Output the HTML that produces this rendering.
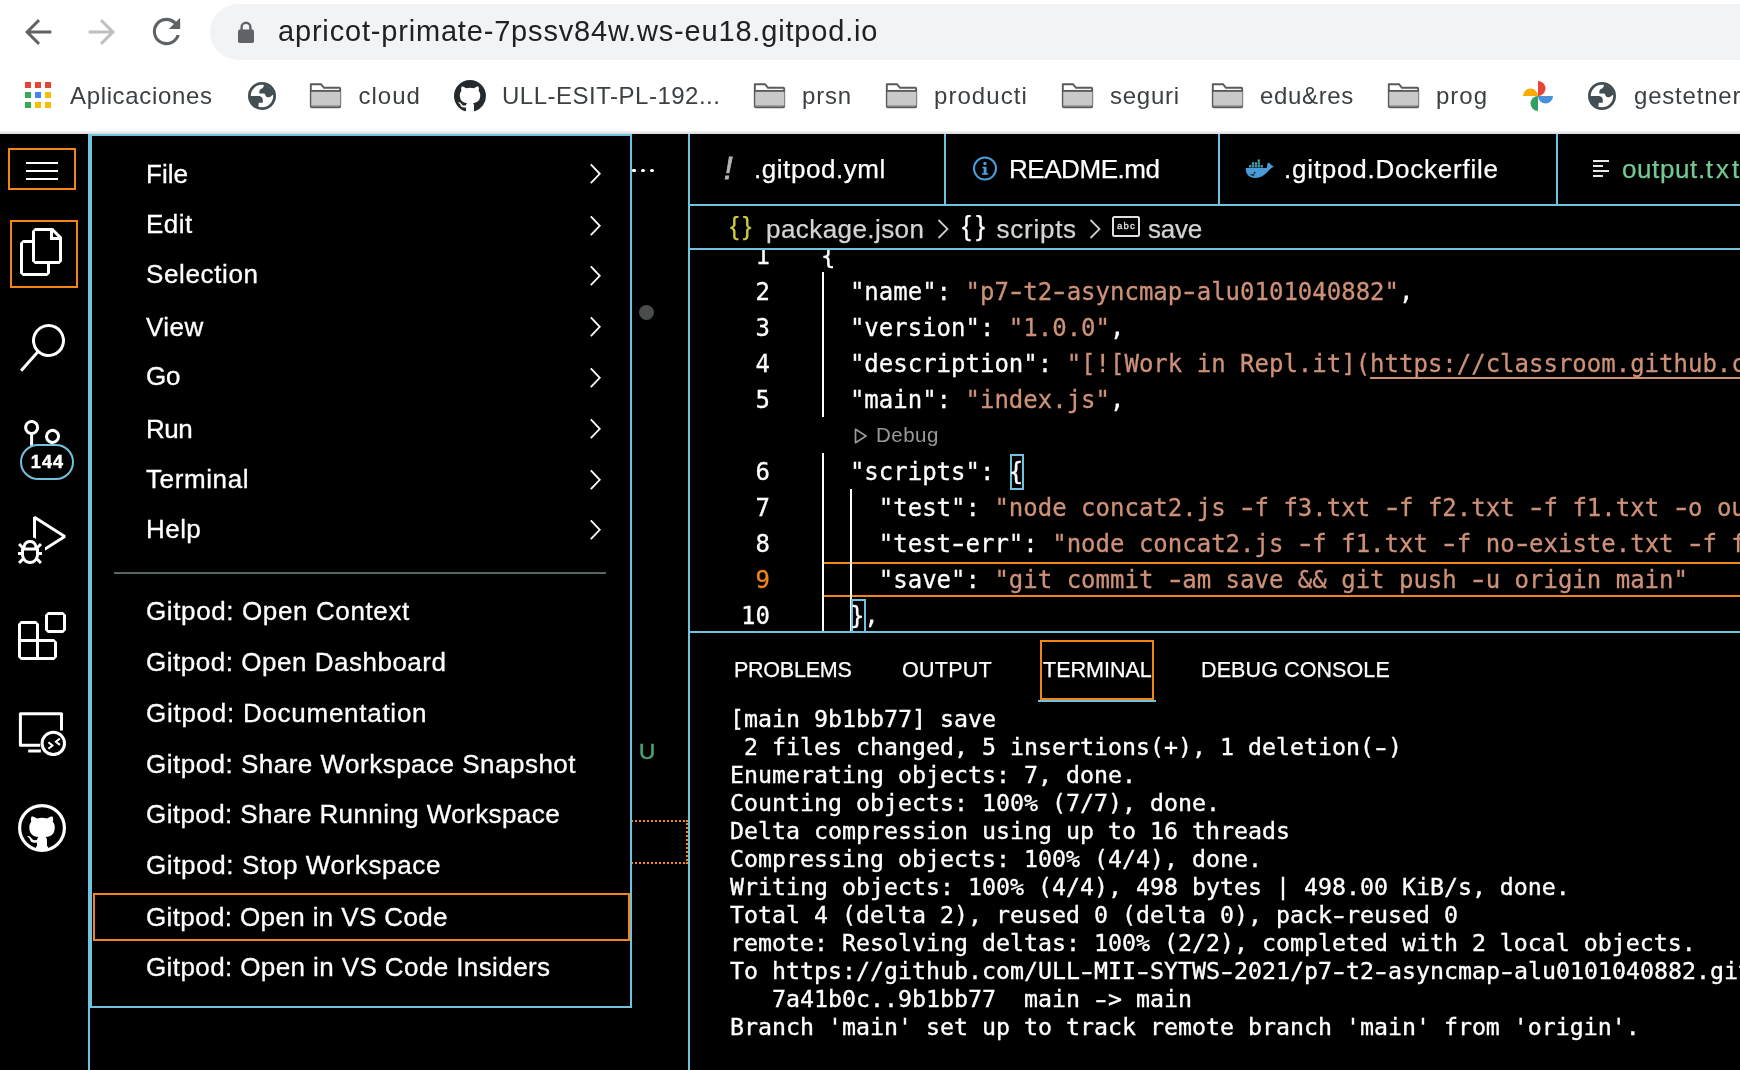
<!DOCTYPE html>
<html>
<head>
<meta charset="utf-8">
<title>Gitpod workspace</title>
<style>
*{box-sizing:border-box;margin:0;padding:0}
html,body{width:1740px;height:1070px;overflow:hidden;background:#000}
body{position:relative;font-family:"Liberation Sans",sans-serif;color:#fff}
.abs{position:absolute}
/* ---------- browser chrome ---------- */
#chrome{position:absolute;left:0;top:0;width:1740px;height:134px;background:#fff}
#chrome .shade{position:absolute;left:0;top:131px;width:1740px;height:3px;background:linear-gradient(#f4f4f4,#d9d9d9)}
#omni{position:absolute;left:210px;top:4px;width:1600px;height:56px;border-radius:28px;background:#f1f3f4}
#url{position:absolute;left:278px;top:13px;font-size:29px;line-height:36px;color:#202124;white-space:nowrap;letter-spacing:0.82px}
#apps i{position:absolute;width:6px;height:6px;display:block}
.bm{position:absolute;top:81px;font-size:24px;line-height:30px;color:#3c4043;white-space:nowrap;letter-spacing:0.5px}
/* ---------- workbench ---------- */
#wb{position:absolute;left:0;top:134px;width:1740px;height:936px;background:#000}
.vline{position:absolute;background:#6fc3df;width:2px}
.hline{position:absolute;background:#6fc3df;height:2px}
/* menu */
#menu{position:absolute;left:89.8px;top:133.8px;width:542.5px;height:874px;border:2px solid #6fc3df;background:#000}
.mi{-webkit-text-stroke:.3px;position:absolute;left:146px;font-size:26px;line-height:32px;color:#fff;white-space:nowrap;letter-spacing:0.45px}
.chev{position:absolute;left:588.5px;width:12.6px;height:21.6px}
#sel{position:absolute;left:92.7px;top:892.6px;width:537px;height:48.8px;border:2px solid #f38518}
/* editor */
.tab{-webkit-text-stroke:.25px;position:absolute;top:150px;font-size:26px;line-height:36px;color:#fff;white-space:nowrap;letter-spacing:0.3px}
.bc{color:#d4d4d4}
.code{-webkit-text-stroke:.3px;position:absolute;font-family:"DejaVu Sans Mono","Liberation Mono",monospace;font-size:24px;line-height:36px;white-space:pre;color:#fff;letter-spacing:0}
.ln{-webkit-text-stroke:.3px;position:absolute;width:70px;text-align:right;font-family:"DejaVu Sans Mono","Liberation Mono",monospace;font-size:24px;line-height:36px;color:#fff}
.h{display:inline-block;font-weight:normal;transform:scaleX(1.45)}
.s{color:#ce9178}
.s u{text-decoration:underline;text-decoration-thickness:1.6px;text-underline-offset:5px}
.term{-webkit-text-stroke:.35px #fff;position:absolute;left:730px;font-family:"DejaVu Sans Mono","Liberation Mono",monospace;font-size:23.25px;line-height:28px;white-space:pre;color:#fff}
.pt{-webkit-text-stroke:.25px;position:absolute;font-size:21.5px;line-height:30px;color:#fff;white-space:nowrap;letter-spacing:0}
</style>
</head>
<body><div id="root" style="position:absolute;left:0;top:0;width:1740px;height:1070px;will-change:transform">
<div id="chrome">
  <div id="omni"></div>
  <div id="url">apricot-primate-7pssv84w.ws-eu18.gitpod.io</div>
  
  <svg class="abs" style="left:18px;top:12px" width="40" height="40" viewBox="0 0 24 24"><path fill="#5f6368" d="M20 11.1H7.6l5.6-5.6L12 4.2l-7.8 7.8 7.8 7.8 1.2-1.3-5.6-5.6H20z"/></svg>
  <svg class="abs" style="left:82px;top:12px" width="40" height="40" viewBox="0 0 24 24"><path fill="#bdbfc1" d="M4 11.1h12.4l-5.6-5.6L12 4.2l7.8 7.8-7.8 7.8-1.2-1.3 5.6-5.6H4z"/></svg>
  <svg class="abs" style="left:146px;top:11px" width="41" height="41" viewBox="0 0 24 24"><path fill="#5f6368" d="M17.65 6.35C16.2 4.9 14.21 4 12 4c-4.42 0-7.99 3.58-7.99 8s3.57 8 7.99 8c3.73 0 6.84-2.55 7.73-6h-1.88c-.82 2.33-3.04 4.2-5.85 4.2-3.41 0-6.2-2.79-6.2-6.2s2.79-6.2 6.2-6.2c1.76 0 3.24.79 4.32 1.88L13.4 10.6H20V4l-2.35 2.35z"/></svg>
  <svg class="abs" style="left:236px;top:20px" width="20" height="24" viewBox="0 0 20 24"><path fill="none" stroke="#5f6368" stroke-width="2.4" d="M5.6 11V7.2a4.4 4.4 0 0 1 8.8 0V11"/><rect x="2" y="9.6" width="16" height="13.4" rx="1.8" fill="#5f6368"/></svg>
  <div id="apps" class="abs" style="left:25px;top:82px;width:26px;height:26px">
    <i style="left:0;top:0;background:#ea4335"></i><i style="left:10px;top:0;background:#ea4335"></i><i style="left:20px;top:0;background:#ea4335"></i>
    <i style="left:0;top:10px;background:#34a853"></i><i style="left:10px;top:10px;background:#4285f4"></i><i style="left:20px;top:10px;background:#fbbc04"></i>
    <i style="left:0;top:20px;background:#34a853"></i><i style="left:10px;top:20px;background:#fbbc04"></i><i style="left:20px;top:20px;background:#fbbc04"></i>
  </div>
  <div class="bm" style="left:70px;letter-spacing:.65px">Aplicaciones</div>
  <svg class="abs" style="left:248px;top:82px" width="28" height="28" viewBox="0 0 28 28"><defs><clipPath id="g245"><circle cx="14" cy="14" r="11.6"/></clipPath></defs><circle cx="14" cy="14" r="12.6" fill="#fff" stroke="#434d54" stroke-width="2.800"/><g clip-path="url(#g245)" fill="#434d54"><path d="M16 0L16 2C15.800 5 15 6.300 13.500 6.800C11.800 7.400 11.300 8.500 11.300 11.400L16 11.400C17 11.400 17.200 12.500 17.900 14.300C18.600 15.200 19.600 15.400 20.700 15.200C22.500 15 23.900 13.300 25.300 12.400L28 12L28 0Z"/><path d="M0 13.900L11.300 14.100C13.500 14.400 14.800 16 14.800 18L14.800 20.800L10.800 20.800L10.400 24.100L10 28L0 28Z"/></g></svg>
  <svg class="abs" style="left:309px;top:82px" width="34" height="28" viewBox="0 0 34 28"><path d="M1.8 2.2h10.2l3 3.6h15.2q1 0 1 1v17.4q0 1-1 1H2.8q-1 0-1-1z" fill="#fff" stroke="#5a5a5a" stroke-width="1.9" stroke-linejoin="round"/><path d="M2.4 9.3h29v14.4h-29z" fill="#c9c9c9"/><path d="M1.8 8.9h29.4" stroke="#5a5a5a" stroke-width="1.9"/><path d="M2.6 23.6h28.8" stroke="#9a9a9a" stroke-width="1"/></svg>
  <div class="bm" style="left:358.5px;letter-spacing:1px">cloud</div>
  <svg class="abs" style="left:454px;top:80px" width="32" height="32" viewBox="0 0 16 16"><path fill="#24292e" d="M8 0C3.58 0 0 3.58 0 8c0 3.54 2.29 6.53 5.47 7.59.4.07.55-.17.55-.38 0-.19-.01-.82-.01-1.49-2.01.37-2.53-.49-2.69-.94-.09-.23-.48-.94-.82-1.13-.28-.15-.68-.52-.01-.53.63-.01 1.08.58 1.23.82.72 1.21 1.87.87 2.33.66.07-.52.28-.87.51-1.07-1.78-.2-3.64-.89-3.64-3.95 0-.87.31-1.59.82-2.15-.08-.2-.36-1.02.08-2.12 0 0 .67-.21 2.2.82.64-.18 1.32-.27 2-.27.68 0 1.36.09 2 .27 1.53-1.04 2.2-.82 2.2-.82.44 1.1.16 1.92.08 2.12.51.56.82 1.27.82 2.15 0 3.07-1.87 3.75-3.65 3.95.29.25.54.73.54 1.48 0 1.07-.01 1.93-.01 2.2 0 .21.15.46.55.38A8.013 8.013 0 0016 8c0-4.42-3.58-8-8-8z"/></svg>
  <div class="bm" style="left:502px">ULL-ESIT-PL-192...</div>
  <svg class="abs" style="left:753px;top:82px" width="34" height="28" viewBox="0 0 34 28"><path d="M1.8 2.2h10.2l3 3.6h15.2q1 0 1 1v17.4q0 1-1 1H2.8q-1 0-1-1z" fill="#fff" stroke="#5a5a5a" stroke-width="1.9" stroke-linejoin="round"/><path d="M2.4 9.3h29v14.4h-29z" fill="#c9c9c9"/><path d="M1.8 8.9h29.4" stroke="#5a5a5a" stroke-width="1.9"/><path d="M2.6 23.6h28.8" stroke="#9a9a9a" stroke-width="1"/></svg>
  <div class="bm" style="left:802px;letter-spacing:0.8px">prsn</div>
  <svg class="abs" style="left:885px;top:82px" width="34" height="28" viewBox="0 0 34 28"><path d="M1.8 2.2h10.2l3 3.6h15.2q1 0 1 1v17.4q0 1-1 1H2.8q-1 0-1-1z" fill="#fff" stroke="#5a5a5a" stroke-width="1.9" stroke-linejoin="round"/><path d="M2.4 9.3h29v14.4h-29z" fill="#c9c9c9"/><path d="M1.8 8.9h29.4" stroke="#5a5a5a" stroke-width="1.9"/><path d="M2.6 23.6h28.8" stroke="#9a9a9a" stroke-width="1"/></svg>
  <div class="bm" style="left:934px;letter-spacing:1.05px">producti</div>
  <svg class="abs" style="left:1061px;top:82px" width="34" height="28" viewBox="0 0 34 28"><path d="M1.8 2.2h10.2l3 3.6h15.2q1 0 1 1v17.4q0 1-1 1H2.8q-1 0-1-1z" fill="#fff" stroke="#5a5a5a" stroke-width="1.9" stroke-linejoin="round"/><path d="M2.4 9.3h29v14.4h-29z" fill="#c9c9c9"/><path d="M1.8 8.9h29.4" stroke="#5a5a5a" stroke-width="1.9"/><path d="M2.6 23.6h28.8" stroke="#9a9a9a" stroke-width="1"/></svg>
  <div class="bm" style="left:1110px;letter-spacing:0.75px">seguri</div>
  <svg class="abs" style="left:1211px;top:82px" width="34" height="28" viewBox="0 0 34 28"><path d="M1.8 2.2h10.2l3 3.6h15.2q1 0 1 1v17.4q0 1-1 1H2.8q-1 0-1-1z" fill="#fff" stroke="#5a5a5a" stroke-width="1.9" stroke-linejoin="round"/><path d="M2.4 9.3h29v14.4h-29z" fill="#c9c9c9"/><path d="M1.8 8.9h29.4" stroke="#5a5a5a" stroke-width="1.9"/><path d="M2.6 23.6h28.8" stroke="#9a9a9a" stroke-width="1"/></svg>
  <div class="bm" style="left:1260px;letter-spacing:0.65px">edu&amp;res</div>
  <svg class="abs" style="left:1387px;top:82px" width="34" height="28" viewBox="0 0 34 28"><path d="M1.8 2.2h10.2l3 3.6h15.2q1 0 1 1v17.4q0 1-1 1H2.8q-1 0-1-1z" fill="#fff" stroke="#5a5a5a" stroke-width="1.9" stroke-linejoin="round"/><path d="M2.4 9.3h29v14.4h-29z" fill="#c9c9c9"/><path d="M1.8 8.9h29.4" stroke="#5a5a5a" stroke-width="1.9"/><path d="M2.6 23.6h28.8" stroke="#9a9a9a" stroke-width="1"/></svg>
  <div class="bm" style="left:1436px;letter-spacing:1.0px">prog</div>
  <svg class="abs" style="left:1522.3px;top:79.8px" width="32" height="32" viewBox="0 0 32 32">
    <path fill="#ea4335" d="M16 1A7.500 7.500 0 0 1 16 16Z"/>
    <path fill="#f9ab00" d="M1 16A7.500 7.500 0 0 1 16 16Z"/>
    <path fill="#4a90d9" d="M31 16A7.500 7.500 0 0 1 16 16Z"/>
    <path fill="#34a060" d="M16 31A7.500 7.500 0 0 1 16 16Z"/>
  </svg>
  <svg class="abs" style="left:1588px;top:82px" width="28" height="28" viewBox="0 0 28 28"><defs><clipPath id="g1585"><circle cx="14" cy="14" r="11.6"/></clipPath></defs><circle cx="14" cy="14" r="12.6" fill="#fff" stroke="#434d54" stroke-width="2.800"/><g clip-path="url(#g1585)" fill="#434d54"><path d="M16 0L16 2C15.800 5 15 6.300 13.500 6.800C11.800 7.400 11.300 8.500 11.300 11.400L16 11.400C17 11.400 17.200 12.500 17.900 14.300C18.600 15.200 19.600 15.400 20.700 15.200C22.500 15 23.900 13.300 25.300 12.400L28 12L28 0Z"/><path d="M0 13.900L11.300 14.100C13.500 14.400 14.800 16 14.800 18L14.800 20.800L10.800 20.800L10.400 24.100L10 28L0 28Z"/></g></svg>
  <div class="bm" style="left:1634px;letter-spacing:0.8px">gestetner</div>
  <div class="shade"></div>
</div>
<div id="wb"></div>
<!-- activity bar -->
<div class="abs" style="left:8px;top:148px;width:68px;height:42px;border:2px solid #f38518"></div>
<div class="abs" style="left:26px;top:162px;width:32px;height:2px;background:#fff"></div>
<div class="abs" style="left:26px;top:170px;width:32px;height:2px;background:#fff"></div>
<div class="abs" style="left:26px;top:178px;width:32px;height:2px;background:#fff"></div>
<div class="abs" style="left:10px;top:220px;width:68px;height:68px;border:2px solid #f38518"></div>
<svg class="abs" style="left:18px;top:228px" width="48" height="48" viewBox="0 0 24 24"><path fill="#fff" d="M17.5 0h-9L7 1.5V6H2.5L1 7.5v15.07L2.5 24h12.07L16 22.57V18h4.7l1.3-1.43V4.5L17.5 0zm0 2.12l2.38 2.38H17.5V2.12zm-3 20.38h-12v-15H7v9.07L8.5 18h6v4.5zm6-6h-12v-15H16V6h4.5v10.5z"/></svg>
<svg class="abs" style="left:18px;top:324px" width="48" height="48" viewBox="0 0 24 24"><path fill="#fff" d="M15.25 0a8.25 8.25 0 0 0-6.18 13.72L1 22.88l1.12 1 8.05-9.12A8.251 8.251 0 1 0 15.25.01V0zm0 15a6.75 6.75 0 1 1 0-13.5 6.75 6.75 0 0 1 0 13.5z"/></svg>
<svg class="abs" style="left:18px;top:420px" width="48" height="48" viewBox="0 0 24 24"><path fill="#fff" d="M21.007 8.222A3.738 3.738 0 0 0 15.045 5.2a3.737 3.737 0 0 0 1.156 6.583 2.988 2.988 0 0 1-2.668 1.67h-2.99a4.456 4.456 0 0 0-2.989 1.165V7.4a3.737 3.737 0 1 0-1.494 0v9.117a3.776 3.776 0 1 0 1.816.099 2.99 2.99 0 0 1 2.668-1.667h2.99a4.484 4.484 0 0 0 4.223-3.039 3.736 3.736 0 0 0 3.25-3.687zM4.565 3.738a2.242 2.242 0 1 1 4.484 0 2.242 2.242 0 0 1-4.484 0zm4.484 16.441a2.242 2.242 0 1 1-4.484 0 2.242 2.242 0 0 1 4.484 0zm8.221-9.715a2.242 2.242 0 1 1 0-4.485 2.242 2.242 0 0 1 0 4.485z"/></svg>
<div class="abs" style="left:20px;top:444px;width:54px;height:36px;border:2px solid #6fc3df;border-radius:18px;background:#000;color:#fff;font-weight:bold;font-size:18px;line-height:32px;text-align:center;letter-spacing:1.1px;padding-left:1px;-webkit-text-stroke:.45px">144</div>
<svg class="abs" style="left:18px;top:516px" width="48" height="48" viewBox="0 0 24 24"><path fill="#fff" d="M10.94 13.5l-1.32 1.32a3.73 3.73 0 0 0-7.24 0L1.06 13.5 0 14.56l1.72 1.72-.22.22V18H0v1.5h1.5v.08c.077.489.214.966.41 1.42L0 22.94 1.06 24l1.65-1.65A4.308 4.308 0 0 0 6 24a4.31 4.31 0 0 0 3.29-1.65L10.94 24 12 22.94 10.09 21c.198-.464.336-.951.41-1.45v-.1H12V18h-1.5v-1.5l-.22-.22L12 14.56l-1.06-1.06zM6 13.5a2.25 2.25 0 0 1 2.25 2.25h-4.5A2.25 2.25 0 0 1 6 13.5zm3 6a3.33 3.33 0 0 1-3 3 3.33 3.33 0 0 1-3-3v-2.25h6v2.25zm14.76-9.9v1.26L13.5 17.37V15.6l8.5-5.37L9 2v9.46a5.07 5.07 0 0 0-1.5-.72V.63L8.64 0l15.12 9.6z"/></svg>
<svg class="abs" style="left:18px;top:612px" width="48" height="48" viewBox="0 0 24 24"><path fill="#fff" d="M13.5 1.5L15 0h7.5L24 1.5V9l-1.5 1.5H15L13.5 9V1.5zm1.5 0V9h7.5V1.5H15zM0 15V6l1.5-1.5H9L10.5 6v7.5H18l1.5 1.5v7.5L18 24H1.5L0 22.5V15zm9-1.5V6H1.5v7.5H9zM9 15H1.5v7.5H9V15zm1.500 7.5H18V15h-7.5v7.5z"/></svg>
<svg class="abs" style="left:18px;top:708px" width="48" height="48" viewBox="0 0 48 48"><path fill="none" stroke="#fff" stroke-width="3" stroke-linejoin="round" d="M22.200 37.200H2.400V5.800H43.500V22.500"/><path fill="none" stroke="#fff" stroke-width="3" d="M10.200 43H22.900"/><circle cx="35.300" cy="35.400" r="11.200" fill="#000" stroke="#fff" stroke-width="3"/><path fill="none" stroke="#fff" stroke-width="2.100" d="M30.400 34.300L34.400 37.500L30.400 40.700M41.900 30.500L37.900 33.700L41.900 36.900"/></svg>
<svg class="abs" style="left:18px;top:804px" width="48" height="48" viewBox="0 0 48 48"><circle cx="24" cy="24" r="22.4" fill="none" stroke="#fff" stroke-width="3.200"/><defs><clipPath id="ghc"><circle cx="8" cy="8" r="7.800"/></clipPath></defs><g transform="translate(4 4.200) scale(2.500)" clip-path="url(#ghc)"><path fill="#fff" fill-rule="evenodd" d="M8 0a8 8 0 1 0 0 16a8 8 0 1 0 0-16zM8 0C3.58 0 0 3.58 0 8c0 3.54 2.29 6.53 5.47 7.59.4.07.55-.17.55-.38 0-.19-.01-.82-.01-1.49-2.01.37-2.53-.49-2.69-.94-.09-.23-.48-.94-.82-1.13-.28-.15-.68-.52-.01-.53.63-.01 1.08.58 1.23.82.72 1.21 1.87.87 2.33.66.07-.52.28-.87.51-1.07-1.78-.2-3.64-.89-3.64-3.95 0-.87.31-1.59.82-2.15-.08-.2-.36-1.02.08-2.12 0 0 .67-.21 2.2.82.64-.18 1.32-.27 2-.27.68 0 1.36.09 2 .27 1.53-1.04 2.2-.82 2.2-.82.44 1.1.16 1.92.08 2.12.51.56.82 1.27.82 2.15 0 3.07-1.87 3.75-3.65 3.95.29.25.54.73.54 1.48 0 1.07-.01 1.93-.01 2.2 0 .21.15.46.55.38A8.013 8.013 0 0016 8c0-4.42-3.58-8-8-8z"/></g><rect x="18" y="42.500" width="12" height="3" fill="#fff"/></svg>
<div class="vline" style="left:88.4px;top:134px;height:936px;width:2px"></div>


<!-- sidebar remnants -->
<div class="abs" style="left:632px;top:168.5px;width:3.6px;height:3.4px;background:#fff;border-radius:1.3px"></div>
<div class="abs" style="left:641.3px;top:168.5px;width:3.4px;height:3.4px;background:#fff;border-radius:50%"></div>
<div class="abs" style="left:650.3px;top:168.5px;width:3.4px;height:3.4px;background:#fff;border-radius:50%"></div>
<div class="abs" style="left:638.8px;top:304.8px;width:15px;height:15px;background:#4b4d4d;border-radius:50%"></div>
<div class="abs" style="left:639px;top:737.48px;font-size:22.5px;line-height:30px;color:#4c9c72;-webkit-text-stroke:.6px">U</div>
<div class="abs" style="left:620px;top:820.2px;width:68.2px;height:43.4px;border:2px dotted #f38518"></div>
<div class="vline" style="left:688.1px;top:134px;height:936px;width:2px"></div>

<!-- tabs -->
<div class="vline" style="left:944px;top:134px;height:71px"></div>
<div class="vline" style="left:1218px;top:134px;height:71px"></div>
<div class="vline" style="left:1556.1px;top:134px;height:71px"></div>
<div class="hline" style="left:690px;top:204.3px;width:1050px;height:1.9px"></div>
<div class="hline" style="left:690px;top:247.6px;width:1050px;height:2px"></div>
<div class="tab" style="left:724px;top:150.56px;color:#b4b4b4;font-style:italic;font-size:31px;-webkit-text-stroke:.9px">!</div>
<div class="tab" style="left:754px;top:150.99px;letter-spacing:.55px">.gitpod.yml</div>
<svg class="abs" style="left:972px;top:156px" width="26" height="26" viewBox="0 0 26 26"><circle cx="13" cy="12.6" r="11" fill="none" stroke="#4a9edb" stroke-width="2"/><rect x="11.7" y="10.800" width="2.8" height="7.600" fill="#4a9edb"/><rect x="10.3" y="10.800" width="3" height="1.5" fill="#4a9edb"/><rect x="10" y="17.2" width="6.200" height="1.500" fill="#4a9edb"/><circle cx="13" cy="7.400" r="1.700" fill="#4a9edb"/></svg>
<div class="tab" style="left:1009px;top:150.99px;letter-spacing:-.45px">README.md</div>
<svg class="abs" style="left:1245px;top:158px" width="30" height="22" viewBox="0 0 30 22"><path fill="#4a9cd8" d="M.8 10H21.6C22.300 8.500 22.300 6.800 22.400 5.400C22.900 4.600 23.600 4.500 24.100 4.800C24.900 5.700 25.600 6.500 26.400 7.100C27.200 7.600 28 8 28.700 8.600C27.600 9.600 26.400 10.400 25.200 11.100C24.200 12.400 23 13.600 21.800 14.600C20.500 16.200 19 17.400 17.200 18.300C14.800 19.500 12.300 20.100 9.700 20C7.800 19.900 6 19.500 4.500 18.600C3.200 17.700 2.300 16.600 1.700 15.200C1 13.600.7 11.800.8 10Z"/><path fill="#1b2a36" d="M4.600 16.300C6 16.500 7 16.300 8 15.700L10.200 17.300C8 18.200 6 17.800 4.600 16.300Z"/><circle cx="9.600" cy="14.700" r=".9" fill="#0d1a24"/><rect x="4" y="7.1" width="2.3" height="2.4" fill="#4499d6"/><rect x="4.5" y="7.6" width="1.3" height="1.4" fill="#45a86a"/><rect x="6.8" y="7.1" width="2.3" height="2.4" fill="#4499d6"/><rect x="7.3" y="7.6" width="1.3" height="1.4" fill="#45a86a"/><rect x="9.7" y="7.1" width="2.3" height="2.4" fill="#4499d6"/><rect x="10.2" y="7.6" width="1.3" height="1.4" fill="#45a86a"/><rect x="12.6" y="7.1" width="2.3" height="2.4" fill="#4499d6"/><rect x="13.1" y="7.6" width="1.3" height="1.4" fill="#45a86a"/><rect x="15.6" y="7.1" width="2.3" height="2.4" fill="#4499d6"/><rect x="16.1" y="7.6" width="1.3" height="1.4" fill="#45a86a"/><rect x="6.8" y="4.3" width="2.3" height="2.4" fill="#4499d6"/><rect x="7.3" y="4.8" width="1.3" height="1.4" fill="#45a86a"/><rect x="9.7" y="4.3" width="2.3" height="2.4" fill="#4499d6"/><rect x="10.2" y="4.8" width="1.3" height="1.4" fill="#45a86a"/><rect x="12.6" y="4.3" width="2.3" height="2.4" fill="#4499d6"/><rect x="13.1" y="4.8" width="1.3" height="1.4" fill="#45a86a"/><rect x="12.6" y="1.5" width="2.3" height="2.4" fill="#4499d6"/><rect x="13.1" y="2.0" width="1.3" height="1.4" fill="#45a86a"/></svg>
<div class="tab" style="left:1284px;top:150.99px;letter-spacing:.77px">.gitpod.Dockerfile</div>
<svg class="abs" style="left:1592px;top:159px" width="18" height="20" viewBox="0 0 18 20"><path d="M1 2h16M1 7h10M1 12h16M1 17h10" stroke="#e8e8e8" stroke-width="1.800" fill="none"/></svg>
<div class="tab" style="left:1622px;top:150.99px;color:#73c991;letter-spacing:.6px">output.<span style="letter-spacing:3px">txt</span></div>

<!-- breadcrumbs -->
<div class="tab" style="left:730px;top:208.300px;color:#cbcb41;font-size:26px;letter-spacing:4px">{}</div>
<div class="tab bc" style="left:766px;top:210.79px;letter-spacing:.43px">package.json</div>
<svg class="abs" style="left:937px;top:218.500px" width="12" height="20" viewBox="0 0 12 20"><path d="M1.500 1l9 9-9 9" fill="none" stroke="#ccc" stroke-width="1.800"/></svg>
<div class="tab bc" style="left:962px;top:207.800px;font-size:27px;letter-spacing:5px;color:#fff">{}</div>
<div class="tab bc" style="left:996.5px;top:210.79px;letter-spacing:.75px">scripts</div>
<svg class="abs" style="left:1089px;top:218.500px" width="12" height="20" viewBox="0 0 12 20"><path d="M1.500 1l9 9-9 9" fill="none" stroke="#ccc" stroke-width="1.800"/></svg>
<div class="abs" style="left:1112px;top:216.300px;width:27.600px;height:21px;border:2px solid #e0e0e0;border-radius:2.500px;color:#e0e0e0;font-size:9.500px;line-height:15.500px;text-align:center;letter-spacing:1.300px;padding-left:1.500px;-webkit-text-stroke:.3px">abc</div>
<div class="tab bc" style="left:1148px;top:210.79px;letter-spacing:-.2px">save</div>

<!-- editor -->
<div id="edclip" class="abs" style="left:690px;top:249.6px;width:1050px;height:381.6px;overflow:hidden">
<div class="abs" style="left:133.5px;top:312.9px;width:1000px;height:34.8px;border-top:2px solid #f38518;border-bottom:2px solid #f38518"></div>
<div class="abs" style="left:132.2px;top:22.4px;width:1.6px;height:145px;background:#fff"></div>
<div class="abs" style="left:132.2px;top:203.4px;width:1.6px;height:200px;background:#fff"></div>
<div class="abs" style="left:160.3px;top:239.9px;width:1.6px;height:150px;background:#fff"></div>
<div class="abs" style="left:320px;top:204.4px;width:14px;height:36.3px;border:2px solid #6fc3df"></div>
<div class="abs" style="left:160.6px;top:349.4px;width:15px;height:36px;border:2px solid #6fc3df"></div>
<div class="ln" style="left:10px;top:-11.9px">1</div><div class="code" style="left:131px;top:-11.9px">{</div>
<div class="ln" style="left:10px;top:24.1px">2</div><div class="code" style="left:131px;top:24.1px">  "name": <span class="s">"p7<b class="h">-</b>t2<b class="h">-</b>asyncmap<b class="h">-</b>alu0101040882"</span>,</div>
<div class="ln" style="left:10px;top:60.1px">3</div><div class="code" style="left:131px;top:60.1px">  "version": <span class="s">"1.0.0"</span>,</div>
<div class="ln" style="left:10px;top:96.1px">4</div><div class="code" style="left:131px;top:96.1px">  "description": <span class="s">"[![Work in Repl.it](<u>https://classroom.github.com/assets/work<b class="h">-</b>in<b class="h">-</b>replit</u>"</span>,</div>
<div class="ln" style="left:10px;top:132.1px">5</div><div class="code" style="left:131px;top:132.1px">  "main": <span class="s">"index.js"</span>,</div>
<div class="ln" style="left:10px;top:204.1px">6</div><div class="code" style="left:131px;top:204.1px">  "scripts": {</div>
<div class="ln" style="left:10px;top:240.1px">7</div><div class="code" style="left:131px;top:240.1px">    "test": <span class="s">"node concat2.js <b class="h">-</b>f f3.txt <b class="h">-</b>f f2.txt <b class="h">-</b>f f1.txt <b class="h">-</b>o output.txt"</span>,</div>
<div class="ln" style="left:10px;top:276.1px">8</div><div class="code" style="left:131px;top:276.1px">    "test<b class="h">-</b>err": <span class="s">"node concat2.js <b class="h">-</b>f f1.txt <b class="h">-</b>f no<b class="h">-</b>existe.txt <b class="h">-</b>f f2.txt"</span>,</div>
<div class="ln" style="left:10px;top:312.1px;color:#f38518">9</div><div class="code" style="left:131px;top:312.1px">    "save": <span class="s">"git commit <b class="h">-</b>am save &amp;&amp; git push <b class="h">-</b>u origin main"</span></div>
<div class="ln" style="left:10px;top:348.1px">10</div><div class="code" style="left:131px;top:348.1px">  },</div>
<svg class="abs" style="left:164.3px;top:178.3px" width="14" height="16" viewBox="0 0 14 16"><path d="M1.500 1.300l10.500 6.700-10.500 6.700z" fill="none" stroke="#999" stroke-width="1.700" stroke-linejoin="round"/></svg>
<div class="abs" style="left:186px;top:172.1px;font-size:20.5px;line-height:26px;color:#999;letter-spacing:.5px">Debug</div>
</div>

<!-- panel -->
<div class="hline" style="left:690px;top:631.2px;width:1050px;height:2.1px"></div>
<div class="pt" style="left:734px;top:655.35px;letter-spacing:-.25px">PROBLEMS</div>
<div class="pt" style="left:902px;top:655.35px;letter-spacing:.27px">OUTPUT</div>
<div class="pt" style="left:1043px;top:655.35px">TERMINAL</div>
<div class="pt" style="left:1201px;top:655.35px;letter-spacing:.1px">DEBUG CONSOLE</div>
<div class="abs" style="left:1039.8px;top:640.3px;width:114.2px;height:59.6px;border:2px solid #f38518"></div>
<div class="hline" style="left:1038px;top:699.8px;width:117.7px;height:2px"></div>
<div class="term" style="top:705.06px">[main 9b1bb77] save</div>
<div class="term" style="top:733.06px"> 2 files changed, 5 insertions(+), 1 deletion(<b class="h">-</b>)</div>
<div class="term" style="top:761.06px">Enumerating objects: 7, done.</div>
<div class="term" style="top:789.06px">Counting objects: 100% (7/7), done.</div>
<div class="term" style="top:817.06px">Delta compression using up to 16 threads</div>
<div class="term" style="top:845.06px">Compressing objects: 100% (4/4), done.</div>
<div class="term" style="top:873.06px">Writing objects: 100% (4/4), 498 bytes | 498.00 KiB/s, done.</div>
<div class="term" style="top:901.06px">Total 4 (delta 2), reused 0 (delta 0), pack<b class="h">-</b>reused 0</div>
<div class="term" style="top:929.06px">remote: Resolving deltas: 100% (2/2), completed with 2 local objects.</div>
<div class="term" style="top:957.06px">To https://github.com/ULL<b class="h">-</b>MII<b class="h">-</b>SYTWS<b class="h">-</b>2021/p7<b class="h">-</b>t2<b class="h">-</b>asyncmap<b class="h">-</b>alu0101040882.git</div>
<div class="term" style="top:985.06px">   7a41b0c..9b1bb77  main <b class="h">-</b>&gt; main</div>
<div class="term" style="top:1013.06px">Branch 'main' set up to track remote branch 'main' from 'origin'.</div>

<!-- menu -->
<div id="menu"></div>
<div class="mi" style="top:158.49px;letter-spacing:0.03px">File</div>
<svg class="chev" style="top:163.2px" viewBox="0 0 14 24"><path d="M2 1.5l10 10.5-10 10.500" fill="none" stroke="#fff" stroke-width="2"/></svg>
<div class="mi" style="top:208.49px">Edit</div>
<svg class="chev" style="top:215.2px" viewBox="0 0 14 24"><path d="M2 1.5l10 10.5-10 10.500" fill="none" stroke="#fff" stroke-width="2"/></svg>
<div class="mi" style="top:258.39px;letter-spacing:0.64px">Selection</div>
<svg class="chev" style="top:265.2px" viewBox="0 0 14 24"><path d="M2 1.5l10 10.5-10 10.500" fill="none" stroke="#fff" stroke-width="2"/></svg>
<div class="mi" style="top:310.69px">View</div>
<svg class="chev" style="top:315.7px" viewBox="0 0 14 24"><path d="M2 1.5l10 10.5-10 10.500" fill="none" stroke="#fff" stroke-width="2"/></svg>
<div class="mi" style="top:360.39px;letter-spacing:-0.1px">Go</div>
<svg class="chev" style="top:366.7px" viewBox="0 0 14 24"><path d="M2 1.5l10 10.5-10 10.500" fill="none" stroke="#fff" stroke-width="2"/></svg>
<div class="mi" style="top:412.89px;letter-spacing:-0.5px">Run</div>
<svg class="chev" style="top:417.7px" viewBox="0 0 14 24"><path d="M2 1.5l10 10.5-10 10.500" fill="none" stroke="#fff" stroke-width="2"/></svg>
<div class="mi" style="top:462.79px;letter-spacing:0.61px">Terminal</div>
<svg class="chev" style="top:469.2px" viewBox="0 0 14 24"><path d="M2 1.5l10 10.5-10 10.500" fill="none" stroke="#fff" stroke-width="2"/></svg>
<div class="mi" style="top:513.29px">Help</div>
<svg class="chev" style="top:519.2px" viewBox="0 0 14 24"><path d="M2 1.5l10 10.5-10 10.500" fill="none" stroke="#fff" stroke-width="2"/></svg>
<div class="mi" style="top:595.29px;letter-spacing:0.62px">Gitpod: Open Context</div>
<div class="mi" style="top:645.99px;letter-spacing:0.52px">Gitpod: Open Dashboard</div>
<div class="mi" style="top:696.59px;letter-spacing:0.73px">Gitpod: Documentation</div>
<div class="mi" style="top:747.79px;letter-spacing:0.49px">Gitpod: Share Workspace Snapshot</div>
<div class="mi" style="top:798.19px;letter-spacing:0.41px">Gitpod: Share Running Workspace</div>
<div class="mi" style="top:848.69px;letter-spacing:0.62px">Gitpod: Stop Workspace</div>
<div class="mi" style="top:900.59px;letter-spacing:0.37px">Gitpod: Open in VS Code</div>
<div class="mi" style="top:950.69px;letter-spacing:0.4px">Gitpod: Open in VS Code Insiders</div>
<div class="abs" style="left:114px;top:572.2px;width:492px;height:2px;background:#566"></div>
<div id="sel"></div>

</div></body>
</html>
